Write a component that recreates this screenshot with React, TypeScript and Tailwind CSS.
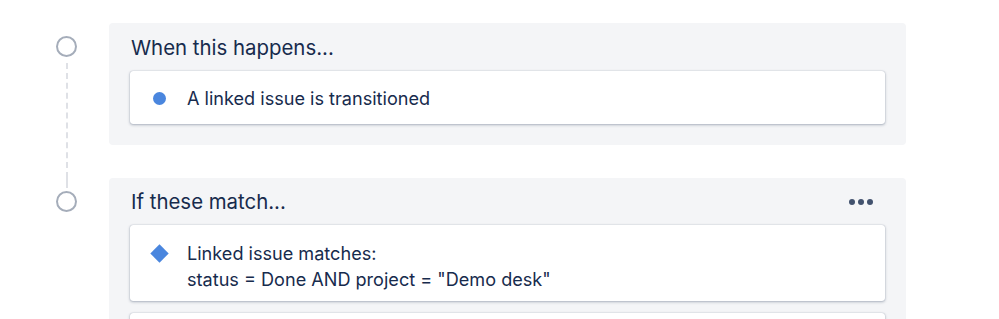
const font = { fontFamily: 'Inter, "Liberation Sans", Arial, sans-serif' }

function Circle() {
  return <div className="w-[21px] h-[21px] rounded-full border-[2.5px] border-[#a5adba] bg-white shrink-0" />
}

function Card({ icon, lines, className }: { icon: "dot" | "diamond"; lines: string[]; className?: string }) {
  return (
    <div className={"flex bg-white rounded-[3px] shadow-[0_1px_3px_rgba(9,30,66,0.3),0_0_1px_rgba(9,30,66,0.35)] pl-[22px] pr-4 " + (className ?? "")}>
      <div className="w-[14px] h-[26px] flex items-center justify-center shrink-0">
        {icon === "dot" ? (
          <div className="w-[13px] h-[13px] rounded-full bg-[#4a86de]" />
        ) : (
          <div className="w-[13px] h-[13px] rotate-45 bg-[#4a86de]" />
        )}
      </div>
      <div className="ml-[21px] text-[18.1px] leading-[26px] text-[#172b4d]">
        {lines.map((l) => (
          <div key={l}>{l}</div>
        ))}
      </div>
    </div>
  )
}

export default function App() {
  return (
    <div className="w-[999px] h-[319px] overflow-hidden bg-white" style={font}>
      <div className="pt-[23px] pl-[56px] w-[906px]">
        {/* step 1 */}
        <div className="flex">
          <div className="w-[21px] flex flex-col items-center pt-[13px]">
            <Circle />
            <div className="flex-1 border-l-2 border-dashed border-[#dfe1e6] mt-[6px]" />
          </div>
          <div className="flex-1 ml-[32px] mb-[33px] bg-[#f4f5f7] rounded-[4px] px-[21px] pt-[13px] pb-[21px]">
            <div className="text-[20.4px] leading-[24px] text-[#172b4d] pl-[1px] mb-[11px]">When this happens...</div>
            <Card icon="dot" lines={["A linked issue is transitioned"]} className="pt-[14px] pb-[13px]" />
          </div>
        </div>
        {/* step 2 */}
        <div className="flex">
          <div className="w-[21px] flex flex-col items-center">
            <div className="h-[10px] border-l-2 border-dashed border-[#dfe1e6] mb-[3px]" />
            <Circle />
          </div>
          <div className="flex-1 ml-[32px] bg-[#f4f5f7] rounded-[4px] px-[21px] pt-[12px] pb-[21px]">
            <div className="flex items-center justify-between mb-[11px]">
              <div className="text-[20.4px] leading-[24px] text-[#172b4d] pl-[1px]">If these match...</div>
              <div className="flex gap-[3px] mr-[12px]">
                <span className="w-[6px] h-[6px] rounded-full bg-[#42526e]" />
                <span className="w-[6px] h-[6px] rounded-full bg-[#42526e]" />
                <span className="w-[6px] h-[6px] rounded-full bg-[#42526e]" />
              </div>
            </div>
            <Card
              icon="diamond"
              lines={["Linked issue matches:", 'status = Done AND project = "Demo desk"']}
              className="pt-[15px] pb-[9px]"
            />
            <div className="mt-[12px] h-[53px] bg-white rounded-[3px] shadow-[0_1px_3px_rgba(9,30,66,0.3),0_0_1px_rgba(9,30,66,0.35)]" />
          </div>
        </div>
      </div>
    </div>
  )
}
